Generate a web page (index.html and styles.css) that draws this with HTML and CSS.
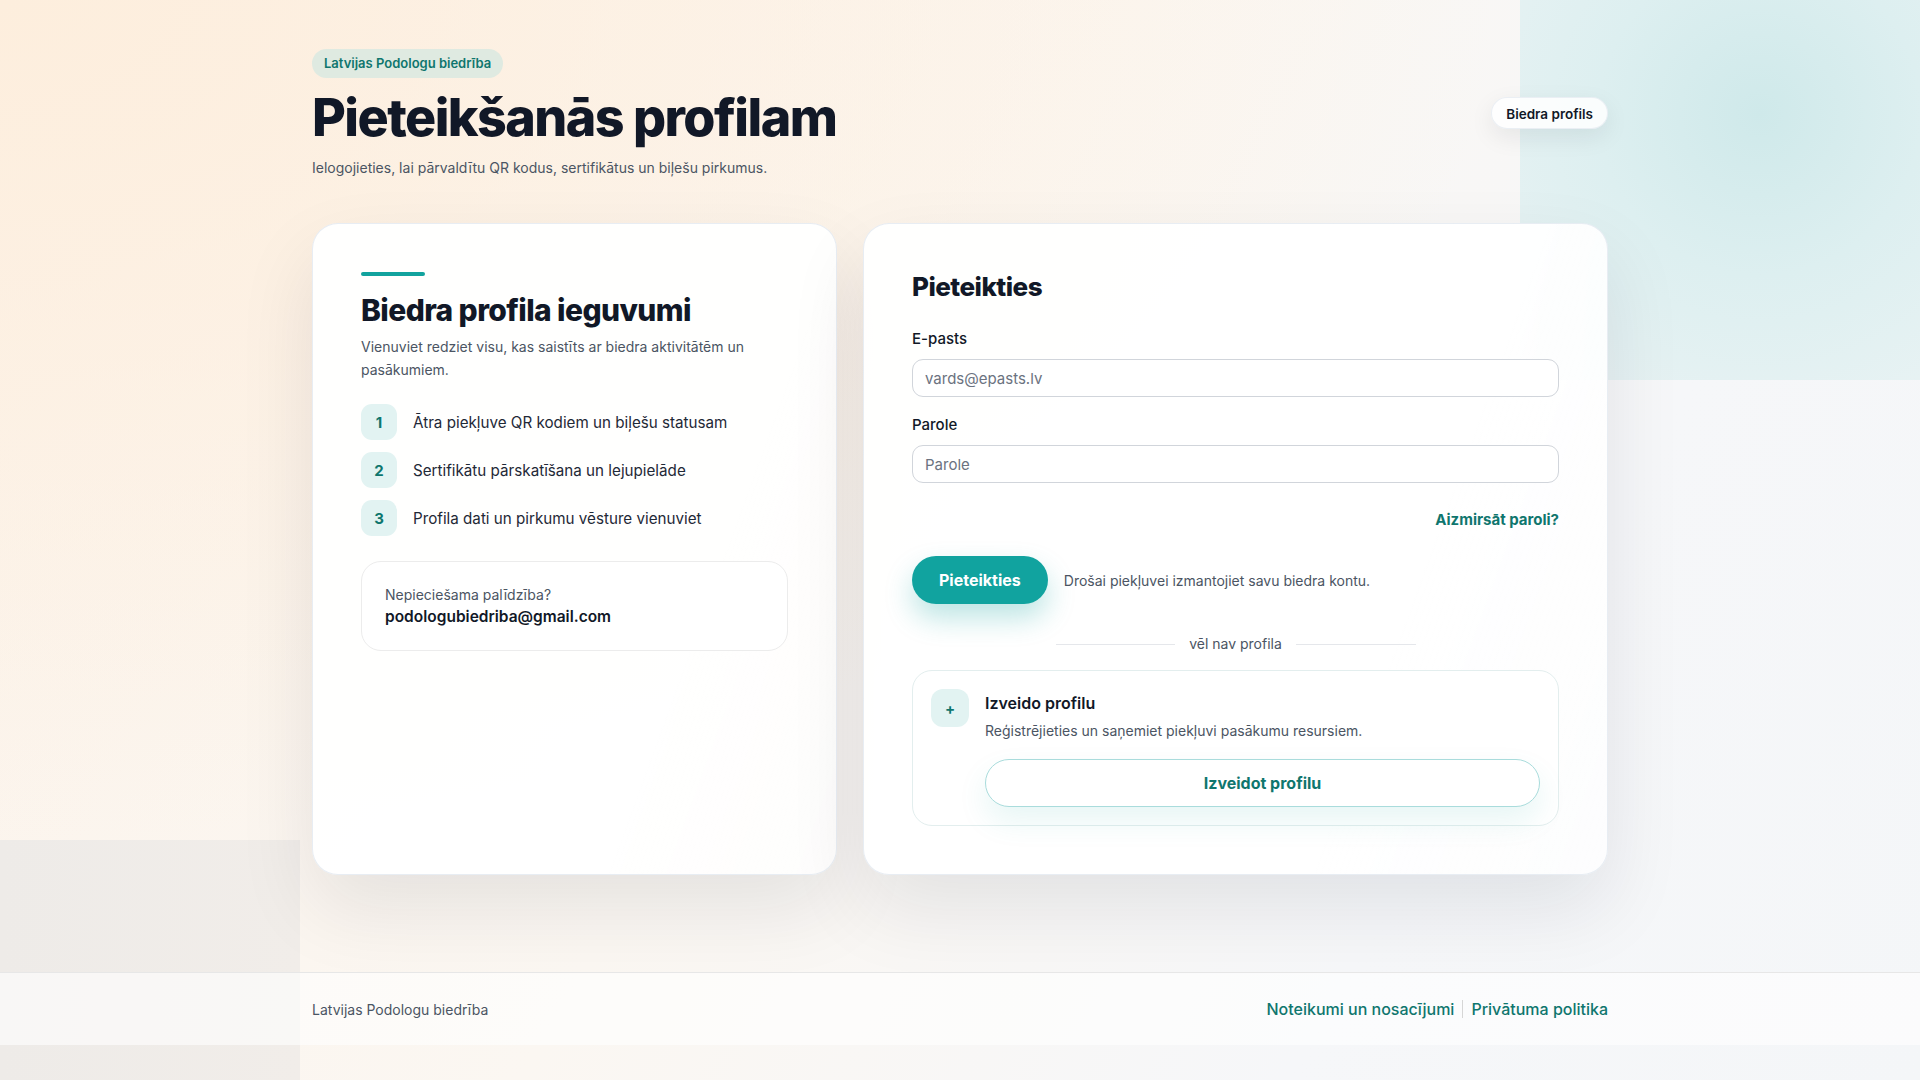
FILE: index.html
```html
<!DOCTYPE html>
<html lang="lv">

<head>
  <meta charset="UTF-8" />
  <meta name="viewport" content="width=device-width, initial-scale=1.0" />
  <title>Pieteikšanās profilam</title>
  <link rel="stylesheet" href="styles.css">
</head>

<body>
  <div class="bg-glow"></div>
  <div class="bg-patch"></div>

  <main class="page">
    <header class="top">
      <div class="top-text">
        <span class="badge">Latvijas Podologu biedrība</span>
        <h1>Pieteikšanās profilam</h1>
        <p class="lead">Ielogojieties, lai pārvaldītu QR kodus, sertifikātus un biļešu pirkumus.</p>
      </div>
      <a href="#" class="pill-link">Biedra profils</a>
    </header>

    <section class="cards">
      <!-- benefits -->
      <div class="card card-info">
        <span class="accent"></span>
        <h2>Biedra profila ieguvumi</h2>
        <p class="muted">Vienuviet redziet visu, kas saistīts ar biedra aktivitātēm un pasākumiem.</p>
        <ul class="steps">
          <li><span class="num">1</span>Ātra piekļuve QR kodiem un biļešu statusam</li>
          <li><span class="num">2</span>Sertifikātu pārskatīšana un lejupielāde</li>
          <li><span class="num">3</span>Profila dati un pirkumu vēsture vienuviet</li>
        </ul>
        <div class="help">
          <span class="help-label">Nepieciešama palīdzība?</span>
          <span class="help-mail">podologubiedriba@gmail.com</span>
        </div>
      </div>

      <!-- login form -->
      <div class="card card-login">
        <h3>Pieteikties</h3>
        <form class="login-form">
          <div class="field">
            <label for="email">E-pasts</label>
            <input id="email" type="email" placeholder="vards@epasts.lv">
          </div>
          <div class="field">
            <label for="password">Parole</label>
            <input id="password" type="password" placeholder="Parole">
          </div>
          <div class="forgot"><a href="#">Aizmirsāt paroli?</a></div>
          <div class="submit-row">
            <button type="button" class="btn-primary">Pieteikties</button>
            <span class="hint">Drošai piekļuvei izmantojiet savu biedra kontu.</span>
          </div>
        </form>

        <div class="divider"><span>vēl nav profila</span></div>

        <div class="register">
          <span class="plus">+</span>
          <div class="register-body">
            <strong>Izveido profilu</strong>
            <p>Reģistrējieties un saņemiet piekļuvi pasākumu resursiem.</p>
            <button type="button" class="btn-outline">Izveidot profilu</button>
          </div>
        </div>
      </div>
    </section>
  </main>

  <footer class="footer">
    <div class="footer-inner">
      <span>Latvijas Podologu biedrība</span>
      <nav class="footer-links">
        <a href="#">Noteikumi un nosacījumi</a>
        <span class="sep"></span>
        <a href="#">Privātuma politika</a>
      </nav>
    </div>
  </footer>
</body>

</html>
```

FILE: styles.css
```css
/* Reset */
* {
    margin: 0;
    padding: 0;
    box-sizing: border-box;
}

body {
    position: relative;
    min-height: 1080px;
    font-family: Inter, "Noto Sans", sans-serif;
    color: #111827;
    background:
        radial-gradient(ellipse at 0% 0%, #fdeedd 0%, rgba(253, 238, 221, 0) 55%),
        linear-gradient(120deg, #fcf3ea 0%, #fbf7f2 45%, #f6f7f9 75%, #f4f6f8 100%);
    overflow: hidden;
}

/* decorative background shapes */
.bg-glow {
    position: absolute;
    top: 0;
    right: 0;
    width: 400px;
    height: 380px;
    background:
        radial-gradient(circle at 60% 30%, #cfe9ea 0%, #ddeff0 45%, #eaf3f4 100%);
    z-index: 0;
}

.bg-patch {
    position: absolute;
    left: 0;
    top: 840px;
    width: 300px;
    height: 240px;
    background: linear-gradient(90deg, #eeebe8, #f1ede9);
    z-index: 0;
}

.page {
    position: relative;
    z-index: 1;
    width: 1296px;
    margin: 0 auto;
    padding: 49px 0 97px;
}

/* Header */
.top {
    display: flex;
    justify-content: space-between;
    align-items: center;
}

.badge {
    display: inline-block;
    height: 29px;
    line-height: 29px;
    padding: 0 12px;
    border-radius: 15px;
    background-color: #dfeae1;
    color: #0f766e;
    font-size: 13px;
    font-weight: 600;
}

.top h1 {
    margin-top: 8px;
    font-size: 52px;
    line-height: 64px;
    font-weight: 800;
    letter-spacing: -0.03em;
    color: #111827;
}

.lead {
    margin-top: 9px;
    font-size: 14px;
    color: #4b5563;
}

.pill-link {
    display: inline-block;
    height: 32px;
    line-height: 32px;
    padding: 0 14px;
    border-radius: 16px;
    background-color: rgba(255, 255, 255, 0.85);
    border: 1px solid rgba(226, 232, 240, 0.7);
    box-shadow: 0 8px 24px rgba(15, 23, 42, 0.08);
    color: #111827;
    font-size: 13.5px;
    font-weight: 600;
    text-decoration: none;
}

/* Cards */
.cards {
    display: grid;
    grid-template-columns: 525px 1fr;
    gap: 26px;
    margin-top: 47px;
}

.card {
    padding: 48px;
    border-radius: 26px;
    background: linear-gradient(110deg, rgba(255, 255, 255, 0.94) 70%, rgba(255, 255, 255, 0.75));
    border: 1px solid rgba(226, 232, 240, 0.8);
    box-shadow: 0 34px 80px rgba(15, 23, 42, 0.09);
}

.accent {
    display: block;
    width: 64px;
    height: 4px;
    border-radius: 2px;
    background-color: #12a39e;
}

.card-info h2 {
    margin-top: 17px;
    font-size: 30px;
    line-height: 34px;
    font-weight: 800;
    letter-spacing: -0.02em;
    color: #111827;
}

.muted {
    margin-top: 8px;
    font-size: 14px;
    line-height: 23px;
    color: #4b5563;
}

.steps {
    list-style: none;
    margin-top: 23px;
    display: flex;
    flex-direction: column;
    gap: 12px;
}

.steps li {
    display: flex;
    align-items: center;
    gap: 16px;
    font-size: 15.2px;
    color: #1f2937;
}

.num {
    display: flex;
    align-items: center;
    justify-content: center;
    width: 36px;
    height: 36px;
    border-radius: 11px;
    background-color: #e2f3f2;
    color: #0f766e;
    font-size: 15px;
    font-weight: 700;
}

.help {
    margin-top: 25px;
    padding: 23px 23px 21px;
    border: 1px solid #ececec;
    border-radius: 20px;
    background-color: #fff;
    display: flex;
    flex-direction: column;
}

.help-label {
    font-size: 14px;
    line-height: 20px;
    color: #4b5563;
}

.help-mail {
    font-size: 15.5px;
    line-height: 24px;
    font-weight: 600;
    color: #111827;
}

/* Login */
.card-login h3 {
    font-size: 26px;
    line-height: 30px;
    font-weight: 800;
    letter-spacing: -0.02em;
    color: #111827;
}

.login-form {
    margin-top: 27px;
}

.field {
    display: flex;
    flex-direction: column;
    gap: 10px;
    margin-bottom: 18px;
}

.field label {
    font-size: 15px;
    line-height: 20px;
    font-weight: 500;
    color: #111827;
}

.field input {
    height: 38px;
    padding: 0 12px;
    border: 1px solid #d1d5db;
    border-radius: 11px;
    background-color: #fff;
    font-family: inherit;
    font-size: 15px;
    color: #111827;
}

.field input::placeholder {
    color: #6b7280;
}

/* collapses with the field margin above */
.forgot {
    margin-top: 26px;
    text-align: right;
    line-height: 20px;
}

.forgot a {
    color: #0f766e;
    font-size: 15px;
    font-weight: 700;
    text-decoration: none;
}

.submit-row {
    margin-top: 26px;
    display: flex;
    align-items: center;
    gap: 16px;
}

.btn-primary {
    height: 48px;
    padding: 0 27px;
    border: none;
    border-radius: 24px;
    background-color: #11a39f;
    color: #fff;
    font-family: inherit;
    font-size: 16px;
    font-weight: 700;
    box-shadow: 0 14px 28px rgba(17, 163, 159, 0.28);
    cursor: pointer;
}

.hint {
    font-size: 14px;
    color: #4b5563;
}

.divider {
    margin: 30px auto 0;
    width: 360px;
    display: flex;
    align-items: center;
    gap: 14px;
    font-size: 14px;
    line-height: 20px;
    color: #4b5563;
}

.divider::before,
.divider::after {
    content: "";
    flex: 1;
    height: 1px;
    background-color: #e5e7eb;
}

.register {
    margin-top: 16px;
    display: flex;
    gap: 16px;
    padding: 20px 18px 18px;
    border: 1px solid #e3eeee;
    border-radius: 20px;
    background-color: #fff;
}

.plus {
    flex: none;
    display: flex;
    align-items: center;
    justify-content: center;
    width: 38px;
    height: 38px;
    margin-top: -2px;
    border-radius: 12px;
    background-color: #e2f3f2;
    color: #0f766e;
    font-size: 15px;
    font-weight: 700;
}

.register-body {
    flex: 1;
}

.register-body strong {
    display: block;
    font-size: 16px;
    line-height: 24px;
    font-weight: 600;
    color: #111827;
}

.register-body p {
    margin-top: 6px;
    font-size: 14px;
    line-height: 20px;
    color: #4b5563;
}

.btn-outline {
    margin-top: 18px;
    width: 100%;
    height: 48px;
    border: 1px solid #a9dcdc;
    border-radius: 24px;
    background-color: #fff;
    color: #0f766e;
    font-family: inherit;
    font-size: 16px;
    font-weight: 700;
    box-shadow: 0 14px 30px rgba(17, 163, 159, 0.10);
    cursor: pointer;
}

/* Footer */
.footer {
    position: relative;
    z-index: 1;
    height: 73px;
    border-top: 1px solid #e7e7e7;
    background-color: rgba(255, 255, 255, 0.6);
}

.footer-inner {
    width: 1296px;
    height: 100%;
    margin: 0 auto;
    display: flex;
    justify-content: space-between;
    align-items: center;
    font-size: 14px;
    color: #4b5563;
}

.footer-links {
    display: flex;
    align-items: center;
    gap: 8px;
}

.footer-links a {
    color: #0f766e;
    font-size: 16px;
    font-weight: 500;
    text-decoration: none;
}

.sep {
    width: 1px;
    height: 18px;
    background-color: #d6d6d6;
}
```
